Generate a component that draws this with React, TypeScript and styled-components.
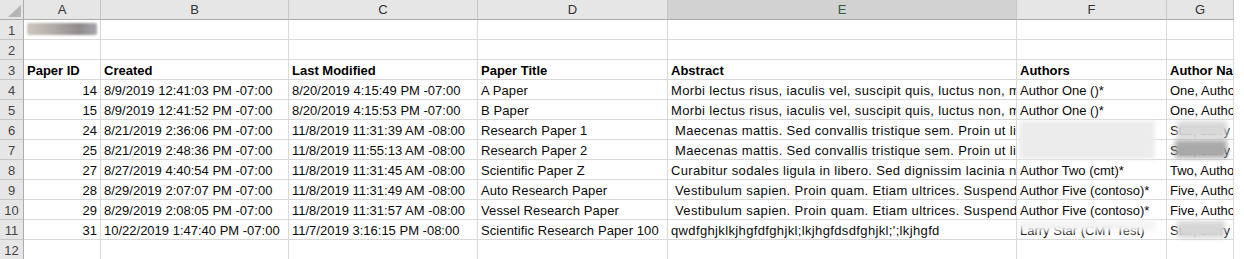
import React from "react";
import styled, { createGlobalStyle, css } from "styled-components";

const GlobalStyle = createGlobalStyle`
  html, body {
    margin: 0;
    padding: 0;
    background: #ffffff;
  }
  body {
    font-family: "Liberation Sans", Arial, sans-serif;
    overflow: hidden;
  }
`;

const Sheet = styled.div`
  display: grid;
  grid-template-columns: 24px 77px 188px 189px 190px 349px 150px 67px;
  grid-auto-rows: 20px;
  width: 1234px;
  font-size: 13px;
  color: #0a0a0a;
`;

const Corner = styled.div`
  position: relative;
  background: #e6e6e6;
  border-right: 1px solid #ababab;
  border-bottom: 1px solid #ababab;

  &::after {
    content: "";
    position: absolute;
    left: 8px;
    top: 5px;
    width: 13px;
    height: 12px;
    background: #b5b5b5;
    clip-path: polygon(100% 0, 100% 100%, 0 100%);
  }
`;

const ColHeader = styled.div<{ $selected?: boolean }>`
  box-sizing: border-box;
  background: ${(p) => (p.$selected ? "#d2d2d2" : "#e6e6e6")};
  color: ${(p) => (p.$selected ? "#2f5d40" : "#333")};
  border-right: 1px solid #c6c6c6;
  border-bottom: 1px solid #ababab;
  text-align: center;
  line-height: 19px;
  font-size: 13px;
`;

const RowHeader = styled.div`
  box-sizing: border-box;
  background: #e6e6e6;
  color: #444;
  border-right: 1px solid #ababab;
  border-bottom: 1px solid #c6c6c6;
  text-align: center;
  line-height: 21px;
  font-size: 13px;
  overflow: hidden;
`;

const Cell = styled.div<{
  $align?: "left" | "right";
  $bold?: boolean;
  $over?: boolean;
  $spread?: number;
}>`
  position: relative;
  box-sizing: border-box;
  border-right: 1px solid #d9d9d9;
  border-bottom: 1px solid #d9d9d9;
  padding: 0 3px 0 3px;
  white-space: pre;
  line-height: 21px;
  text-align: ${(p) => p.$align ?? "left"};
  letter-spacing: ${(p) => p.$spread ?? 0}px;
  overflow: ${(p) => (p.$over ? "visible" : "hidden")};
  ${(p) =>
    p.$bold &&
    css`
      font-weight: 700;
      color: #000;
      letter-spacing: 0;
    `}
`;

const Clip = styled.div`
  overflow: hidden;
  white-space: pre;
`;

const TitleBlur = styled.span`
  display: inline-block;
  vertical-align: top;
  margin-top: 3px;
  width: 70px;
  height: 12px;
  border-radius: 2px;
  background: linear-gradient(90deg, #cfc6bd 0%, #b3aeaa 35%, #8f8c8c 75%, #a9a8ad 100%);
  filter: blur(1.2px);
`;

const Redact = styled.div<{ $left: number; $top: number; $w: number; $h: number; $tone: string }>`
  position: absolute;
  left: ${(p) => p.$left}px;
  top: ${(p) => p.$top}px;
  width: ${(p) => p.$w}px;
  height: ${(p) => p.$h}px;
  background: ${(p) => p.$tone};
  filter: blur(2.5px);
  z-index: 2;
  pointer-events: none;
`;

const columns = ["A", "B", "C", "D", "E", "F", "G"];

// extra letter spacing per column, to get closer to the original widths
const spread = [0, 0, 0, 0.1, 0.36, 0, 0];

type Row = [string, string, string, string, string, string, string];

const headers: Row = [
  "Paper ID",
  "Created",
  "Last Modified",
  "Paper Title",
  "Abstract",
  "Authors",
  "Author Names",
];

const maecenas =
  " Maecenas mattis. Sed convallis tristique sem. Proin ut ligula vel nunc egestas porttitor.";
const morbi =
  "Morbi lectus risus, iaculis vel, suscipit quis, luctus non, massa. Fusce ac turpis quis ligula lacinia aliquet.";
const vestibulum =
  " Vestibulum sapien. Proin quam. Etiam ultrices. Suspendisse in justo eu magna luctus suscipit.";

const data: Row[] = [
  ["14", "8/9/2019 12:41:03 PM -07:00", "8/20/2019 4:15:49 PM -07:00", "A Paper", morbi, "Author One ()*", "One, Author*"],
  ["15", "8/9/2019 12:41:52 PM -07:00", "8/20/2019 4:15:53 PM -07:00", "B Paper", morbi, "Author One ()*", "One, Author*"],
  ["24", "8/21/2019 2:36:06 PM -07:00", "11/8/2019 11:31:39 AM -08:00", "Research Paper 1", maecenas, "", "Star, Larry*"],
  ["25", "8/21/2019 2:48:36 PM -07:00", "11/8/2019 11:55:13 AM -08:00", "Research Paper 2", maecenas, "", "Star, Larry*"],
  ["27", "8/27/2019 4:40:54 PM -07:00", "11/8/2019 11:31:45 AM -08:00", "Scientific Paper Z", "Curabitur sodales ligula in libero. Sed dignissim lacinia nunc.", "Author Two (cmt)*", "Two, Author*"],
  ["28", "8/29/2019 2:07:07 PM -07:00", "11/8/2019 11:31:49 AM -08:00", "Auto Research Paper", vestibulum, "Author Five (contoso)*", "Five, Author*"],
  ["29", "8/29/2019 2:08:05 PM -07:00", "11/8/2019 11:31:57 AM -08:00", "Vessel Research Paper", vestibulum, "Author Five (contoso)*", "Five, Author*"],
  ["31", "10/22/2019 1:47:40 PM -07:00", "11/7/2019 3:16:15 PM -08:00", "Scientific Research Paper 100", "qwdfghjklkjhgfdfghjkl;lkjhgfdsdfghjkl;';lkjhgfd", "Larry Star (CMT Test)", "Star, Larry*"],
];

// redacted cells: "data row-column" -> blur boxes laid over the cell
const redactions: Record<string, { left: number; top: number; w: number; h: number; tone: string }[]> = {
  "2-5": [{ left: 2, top: 1, w: 136, h: 38, tone: "#ececec" }],
  "2-6": [{ left: 10, top: 1, w: 50, h: 17, tone: "#d8d8d8" }],
  "3-6": [{ left: 8, top: 0, w: 52, h: 18, tone: "#a9a9a9" }],
  "7-5": [{ left: 2, top: 0, w: 136, h: 11, tone: "#f4f4f4" }],
  "7-6": [{ left: 10, top: 1, w: 48, h: 17, tone: "#d6d6d6" }],
};

const EmptyRow: React.FC<{ n: number }> = ({ n }) => (
  <>
    <RowHeader>{n}</RowHeader>
    {columns.map((c) => (
      <Cell key={c}>{n === 1 && c === "A" ? <TitleBlur /> : null}</Cell>
    ))}
  </>
);

const App: React.FC = () => {
  return (
    <>
      <GlobalStyle />
      <Sheet>
        <Corner />
        {columns.map((c) => (
          <ColHeader key={c} $selected={c === "E"}>
            {c}
          </ColHeader>
        ))}

        <EmptyRow n={1} />
        <EmptyRow n={2} />

        <RowHeader>3</RowHeader>
        {headers.map((h) => (
          <Cell key={h} $bold>
            {h}
          </Cell>
        ))}

        {data.map((row, r) => (
          <React.Fragment key={r}>
            <RowHeader>{r + 4}</RowHeader>
            {row.map((value, c) => {
              const boxes = redactions[`${r}-${c}`];
              if (boxes) {
                return (
                  <Cell key={c} $over $spread={spread[c]}>
                    <Clip>{value}</Clip>
                    {boxes.map((b, i) => (
                      <Redact key={i} $left={b.left} $top={b.top} $w={b.w} $h={b.h} $tone={b.tone} />
                    ))}
                  </Cell>
                );
              }
              return (
                <Cell key={c} $align={c === 0 ? "right" : "left"} $spread={spread[c]}>
                  {value}
                </Cell>
              );
            })}
          </React.Fragment>
        ))}

        <EmptyRow n={12} />
      </Sheet>
    </>
  );
};

export default App;
